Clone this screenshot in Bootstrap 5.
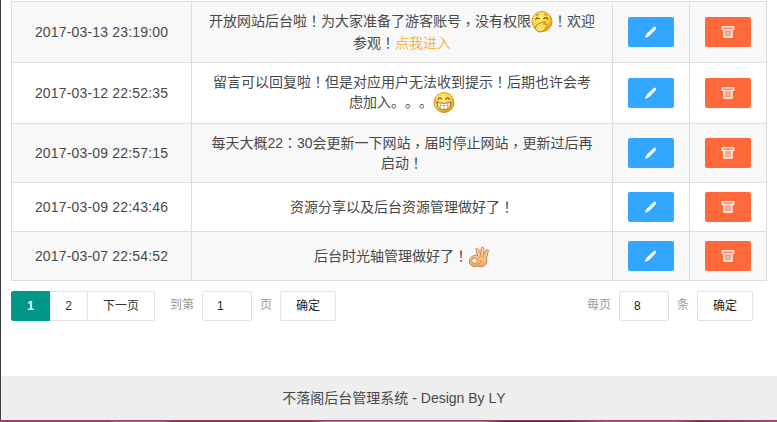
<!DOCTYPE html>
<html lang="zh-CN">
<head>
<meta charset="utf-8">
<meta name="viewport" content="width=device-width, initial-scale=1">
<title>不落阁后台管理系统</title>
<link rel="stylesheet" href="https://cdn.jsdelivr.net/npm/bootstrap@5.3.0/dist/css/bootstrap.min.css">
<style>
body{font:14px/20px "Liberation Sans","Noto Sans CJK SC",sans-serif;color:#484848;height:422px;overflow:hidden;background:#fff;font-kerning:none;text-spacing-trim:space-all}
.main-pane{border-left:1px solid #3a3c48;height:420px;padding-top:1px}
.log-table{width:756px;margin:0 0 0 10px;table-layout:fixed;border-collapse:collapse;color:#484848}
.log-table td{border:1px solid #ddd;padding:0 15px;text-align:center;vertical-align:middle}
.log-table td:nth-child(2){padding-bottom:2px}
.log-table tr:nth-child(odd){background:#f8f8f8}
.h61{height:61px}.h59{height:59px}.h49{height:49px}
.stamp{letter-spacing:.17px;white-space:nowrap}
.ln{display:block;white-space:nowrap;height:20px;line-height:20px}
.ln-tall{height:22px;line-height:22px}
.pc,.pd{font-family:"Noto Sans CJK TC",sans-serif}
.pd{vertical-align:-3px;line-height:1}
.go{color:#ffb233;text-decoration:none}
.face{width:22px;height:22px;vertical-align:middle;margin:-2px 0 -1px}
.act{width:46px;height:30px;border-radius:2px;padding:0;border:0;display:inline-flex;align-items:center;justify-content:center;vertical-align:middle}
.act-edit,.act-edit:hover{background:#33a6ff}
.act-del,.act-del:hover{background:#ff6839}
.pager{margin:10px 24px 0 10px;font-size:12px;line-height:28px;height:30px;color:#999}
.cell-p{height:30px;border:1px solid #e2e2e2;color:#333;text-align:center;background:#fff}
.cur{width:39px;background:#009688;border-color:#009688;color:#fff;font-weight:700;border-radius:2px 0 0 2px}
.w2{width:38px;border-left:0}.wn{width:67px;border-left:0}
.goto{margin-left:15px}
.num{width:50px;padding:0 0 0 14px;text-align:left;border-radius:2px;margin:0 8px;font:12px "Liberation Sans",sans-serif;color:#222}
.ok{width:56px;border-radius:2px;margin-left:8px;padding:1px 0 0;color:#222;line-height:27px;font-size:12px}
.foot{height:44px;background:#eee;margin-top:55px;padding-left:10px;color:#484848}
.strip{height:2px;background:linear-gradient(90deg,#a34067 0,#a34067 14%,#c96087 15%,#c96087 21%,#8c2c56 22%,#8c2c56 40%,#cf7299 42%,#cf7299 62%,#611037 65%,#611037 72%,#b95584 78%,#b95584 87%,#702043 90%,#b05078 100%);border-top:1px solid #9b3d65}
</style>
<script src="https://cdn.jsdelivr.net/npm/bootstrap@5.3.0/dist/js/bootstrap.bundle.min.js"></script>
</head>
<body>
<svg width="0" height="0" class="position-absolute">
  <defs>
    <radialGradient id="gold" cx=".42" cy=".35" r=".65"><stop offset="0" stop-color="#fff27a"/><stop offset=".65" stop-color="#fbd23c"/><stop offset="1" stop-color="#dc9a18"/></radialGradient>
    <linearGradient id="skin" x2="0" y2="1"><stop offset="0" stop-color="#ffe3b5"/><stop offset="1" stop-color="#f2a660"/></linearGradient>
  </defs>
  <symbol id="pen" viewBox="0 0 14 14"><path d="M9.900 1.900q.6-.6 1.200-.2l1 1q.5.6-.1 1.200L5.100 11 1.900 12.800q-.8.1-.7-.8L2.700 8.700z" fill="#fff"/></symbol>
  <symbol id="bin" viewBox="0 0 14 12"><path d="M1.200.9h11.600v2.500H1.200z" fill="none" stroke="#fff" stroke-width="1.1"/><path d="M2.900 3.500v7.600h8.200V3.500" fill="#ffb49c" stroke="#fff" stroke-width="1.200"/><path d="M5.500 5.500h3v4h-3z" fill="none" stroke="#ff9474" stroke-width=".9"/></symbol>
</svg>

<main class="main-pane">
  <table class="log-table">
    <colgroup><col style="width:180px"><col style="width:421px"><col style="width:77px"><col style="width:77px"></colgroup>
    <tbody>
      <tr class="h61">
        <td class="stamp">2017-03-13 23:19:00</td>
        <td><span class="ln ln-tall">开放网站后台啦<span class="pc" lang="zh-TW">！</span>为大家准备了游客账号<span class="pd" lang="zh-TW">，</span>没有权限<svg class="face" viewBox="0 0 22 22"><circle cx="11" cy="10.500" r="10" fill="url(#gold)" stroke="#c98a18" stroke-width=".8"/><path d="M4.500 8.500q2-3 4-.3M12.500 8q2.500-2.800 4.300.4" fill="none" stroke="#704a10" stroke-width="1.300"/><path d="M5 4.500l3-1.200M13 3.300l3 1" stroke="#a87514"/><path d="M4 17.500q1-4.500 5-5.500l5-1.500q1.300.4.300 1.300l-2 1.200 3 .3q1 .8 0 1.500.6 1-.4 1.600-.8 3.800-4.900 4.600-3.500.2-6-3.500z" fill="#ffe060" stroke="#b8740f" stroke-width=".9"/></svg><span class="pc" lang="zh-TW">！</span>欢迎</span><span class="ln ln-tall">参观<span class="pc" lang="zh-TW">！</span><a class="go" href="#">点我进入</a></span></td>
        <td><button class="btn act act-edit" aria-label="编辑"><svg width="14" height="14"><use href="#pen"/></svg></button></td>
        <td><button class="btn act act-del" aria-label="删除"><svg width="14" height="12"><use href="#bin"/></svg></button></td>
      </tr>
      <tr class="h61">
        <td class="stamp">2017-03-12 22:52:35</td>
        <td><span class="ln">留言可以回复啦<span class="pc" lang="zh-TW">！</span>但是对应用户无法收到提示<span class="pc" lang="zh-TW">！</span>后期也许会考</span><span class="ln ln-tall">虑加入。。。<svg class="face" viewBox="0 0 22 22"><circle cx="11" cy="10.500" r="10" fill="url(#gold)" stroke="#c98a18" stroke-width=".8"/><path d="M5 7.500q2-3.500 4 0M12.500 7.500q2-3.500 4 0" fill="none" stroke="#634415" stroke-width="1.200"/><circle cx="3.700" cy="10" r="1.700" fill="#f59b58"/><circle cx="18.300" cy="10" r="1.700" fill="#f59b58"/><path d="M4 10.500q7 1.700 14 0-.3 6.700-7 7.200-6.700-.5-7-7.200z" fill="#fff" stroke="#9d6518" stroke-width=".9"/><path d="M4.700 13.700h12.600M7.500 11.300v5.500M11 11.500v6M14.500 11.300v5.500" stroke="#b4a083" stroke-width=".7"/></svg></span></td>
        <td><button class="btn act act-edit" aria-label="编辑"><svg width="14" height="14"><use href="#pen"/></svg></button></td>
        <td><button class="btn act act-del" aria-label="删除"><svg width="14" height="12"><use href="#bin"/></svg></button></td>
      </tr>
      <tr class="h59">
        <td class="stamp">2017-03-09 22:57:15</td>
        <td><span class="ln">每天大概22<span class="pc" lang="zh-TW">：</span>30会更新一下网站<span class="pd" lang="zh-TW">，</span>届时停止网站<span class="pd" lang="zh-TW">，</span>更新过后再</span><span class="ln">启动<span class="pc" lang="zh-TW">！</span></span></td>
        <td><button class="btn act act-edit" aria-label="编辑"><svg width="14" height="14"><use href="#pen"/></svg></button></td>
        <td><button class="btn act act-del" aria-label="删除"><svg width="14" height="12"><use href="#bin"/></svg></button></td>
      </tr>
      <tr class="h49">
        <td class="stamp">2017-03-09 22:43:46</td>
        <td><span class="ln">资源分享以及后台资源管理做好了<span class="pc" lang="zh-TW">！</span></span></td>
        <td><button class="btn act act-edit" aria-label="编辑"><svg width="14" height="14"><use href="#pen"/></svg></button></td>
        <td><button class="btn act act-del" aria-label="删除"><svg width="14" height="12"><use href="#bin"/></svg></button></td>
      </tr>
      <tr class="h49">
        <td class="stamp">2017-03-07 22:54:52</td>
        <td><span class="ln">后台时光轴管理做好了<span class="pc" lang="zh-TW">！</span><svg class="face" viewBox="0 0 22 22"><path d="M9.500 9.500L7.800 3.200q.7-1.700 2-.5l2.700 5L13.500 1.500q1.300-1.200 2.200.2L16 8l2.700-4.200q1.600-.5 1.700 1L18.500 12q1.200 5-1.700 7.500-3.600 2.500-7.300.2-1.200 1.300-3.500.8-4.500-1.200-4.600-4.500Q1.500 11 6 9.600q2-.8 3.500-.1z" fill="url(#skin)" stroke="#c4763c" stroke-width=".9"/><ellipse cx="6.500" cy="14.800" rx="2.800" ry="2.600" fill="#f8f8f8" stroke="#c4763c" stroke-width=".9"/><path d="M9.500 9.500l2 2.500M12.500 8l.7 3M16 8l-.8 3M10 18q3-1 3.500-3.500" fill="none" stroke="#cc7d42" stroke-width=".8"/></svg></span></td>
        <td><button class="btn act act-edit" aria-label="编辑"><svg width="14" height="14"><use href="#pen"/></svg></button></td>
        <td><button class="btn act act-del" aria-label="删除"><svg width="14" height="12"><use href="#bin"/></svg></button></td>
      </tr>
    </tbody>
  </table>

  <nav class="pager d-flex">
    <span class="cell-p cur">1</span><span class="cell-p w2">2</span><span class="cell-p wn">下一页</span>
    <span class="goto">到第</span><input class="cell-p num" value="1" aria-label="页码"><span>页</span><button class="cell-p ok">确定</button>
    <span class="ms-auto">每页</span><input class="cell-p num" value="8" aria-label="每页条数"><span>条</span><button class="cell-p ok">确定</button>
  </nav>

  <footer class="foot d-flex align-items-center justify-content-center"><span>不落阁后台管理系统 - Design By LY</span></footer>
</main>
<div class="strip"></div>
</body>
</html>
